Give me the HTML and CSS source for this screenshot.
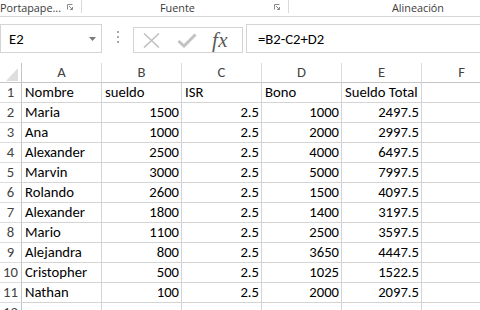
FILE: index.html
```html
<!DOCTYPE html>
<html lang="es">
<head>
<meta charset="utf-8">
<link rel="stylesheet" href="styles.css">
</head>
<body>
<div class="ribbon">
  <div class="group g1">
    <span class="glabel">Portapape...</span>
    <svg class="launcher" width="6" height="6" viewBox="0 0 6 6"><path d="M0.5 5.5V0.5H5.5" fill="none" stroke="#8a8a8a"/><path d="M2 2L5.5 5.5M5.5 3V5.5H3" fill="none" stroke="#8a8a8a"/></svg>
  </div>
  <div class="sep"></div>
  <div class="group g2">
    <span class="glabel">Fuente</span>
    <svg class="launcher" width="6" height="6" viewBox="0 0 6 6"><path d="M0.5 5.5V0.5H5.5" fill="none" stroke="#8a8a8a"/><path d="M2 2L5.5 5.5M5.5 3V5.5H3" fill="none" stroke="#8a8a8a"/></svg>
  </div>
  <div class="sep"></div>
  <div class="group g3">
    <span class="glabel">Alineación</span>
  </div>
</div>

<div class="fbar">
  <div class="namebox">
    <span class="nbtext">E2</span>
    <svg class="nbarrow" width="7" height="4" viewBox="0 0 7 4"><path d="M0 0H7L3.5 4Z" fill="#7a7a7a"/></svg>
  </div>
  <div class="grip">
    <svg width="2" height="13" viewBox="0 0 2 13"><rect x="0" y="0" width="2" height="2" fill="#a8a8a8"/><rect x="0" y="5" width="2" height="2" fill="#a8a8a8"/><rect x="0" y="10" width="2" height="2" fill="#a8a8a8"/></svg>
  </div>
  <div class="fxbox">
    <svg class="ico" width="17" height="15" viewBox="0 0 17 15"><path d="M1 0.5L16 14.5M16 0.5L1 14.5" stroke="#c2c2c2" stroke-width="1.6" fill="none"/></svg>
    <svg class="ico" width="20" height="15" viewBox="0 0 20 15"><path d="M1.5 8L7 13L18.5 1.5" stroke="#c2c2c2" stroke-width="3" fill="none"/></svg>
    <span class="fx">fx</span>
  </div>
  <div class="formula">=B2-C2+D2</div>
</div>

<div class="sheet">
  <div class="cell hdr corner"><svg width="12" height="13" viewBox="0 0 12 13"><path d="M12 0V13H0Z" fill="#dedede"/></svg></div>
  <div class="cell hdr">A</div><div class="cell hdr">B</div><div class="cell hdr">C</div><div class="cell hdr">D</div><div class="cell hdr">E</div><div class="cell hdr">F</div>

  <div class="cell rh">1</div><div class="cell">Nombre</div><div class="cell">sueldo</div><div class="cell">ISR</div><div class="cell">Bono</div><div class="cell">Sueldo Total</div><div class="cell"></div>
  <div class="cell rh">2</div><div class="cell">Maria</div><div class="cell num">1500</div><div class="cell num">2.5</div><div class="cell num">1000</div><div class="cell num">2497.5</div><div class="cell"></div>
  <div class="cell rh">3</div><div class="cell">Ana</div><div class="cell num">1000</div><div class="cell num">2.5</div><div class="cell num">2000</div><div class="cell num">2997.5</div><div class="cell"></div>
  <div class="cell rh">4</div><div class="cell">Alexander</div><div class="cell num">2500</div><div class="cell num">2.5</div><div class="cell num">4000</div><div class="cell num">6497.5</div><div class="cell"></div>
  <div class="cell rh">5</div><div class="cell">Marvin</div><div class="cell num">3000</div><div class="cell num">2.5</div><div class="cell num">5000</div><div class="cell num">7997.5</div><div class="cell"></div>
  <div class="cell rh">6</div><div class="cell">Rolando</div><div class="cell num">2600</div><div class="cell num">2.5</div><div class="cell num">1500</div><div class="cell num">4097.5</div><div class="cell"></div>
  <div class="cell rh">7</div><div class="cell">Alexander</div><div class="cell num">1800</div><div class="cell num">2.5</div><div class="cell num">1400</div><div class="cell num">3197.5</div><div class="cell"></div>
  <div class="cell rh">8</div><div class="cell">Mario</div><div class="cell num">1100</div><div class="cell num">2.5</div><div class="cell num">2500</div><div class="cell num">3597.5</div><div class="cell"></div>
  <div class="cell rh">9</div><div class="cell">Alejandra</div><div class="cell num">800</div><div class="cell num">2.5</div><div class="cell num">3650</div><div class="cell num">4447.5</div><div class="cell"></div>
  <div class="cell rh">10</div><div class="cell">Cristopher</div><div class="cell num">500</div><div class="cell num">2.5</div><div class="cell num">1025</div><div class="cell num">1522.5</div><div class="cell"></div>
  <div class="cell rh">11</div><div class="cell">Nathan</div><div class="cell num">100</div><div class="cell num">2.5</div><div class="cell num">2000</div><div class="cell num">2097.5</div><div class="cell"></div>
  <div class="cell rh">12</div><div class="cell"></div><div class="cell"></div><div class="cell"></div><div class="cell"></div><div class="cell"></div><div class="cell"></div>
</div>
</body>
</html>
```
FILE: styles.css
```css
html, body {
  margin: 0;
  padding: 0;
  background: #ffffff;
}
body {
  width: 480px;
  height: 310px;
  overflow: hidden;
  font-family: "Carlito", "Liberation Sans", sans-serif;
  color: #000;
}

/* Ribbon group labels */
.ribbon {
  display: flex;
  height: 16px;
  border-bottom: 1px solid #d6d6d6;
  font-family: "Open Sans", "Noto Sans", sans-serif;
  font-size: 10.8px;
  color: #3a3a3a;
}
.group {
  display: flex;
  align-items: center;
  height: 16px;
}
.glabel {
  white-space: nowrap;
  line-height: 16px;
}
.g1 {
  width: 81px;
}
.g2 {
  width: 206px;
  padding-left: 78px;
  box-sizing: border-box;
}
.g3 {
  padding-left: 103px;
}
.launcher {
  margin-left: auto;
  margin-right: 8px;
  margin-bottom: 2px;
}
.sep {
  width: 1px;
  height: 13px;
  background: #dadada;
}

/* Formula bar */
.fbar {
  display: flex;
  align-items: flex-end;
  height: 29px;
  margin-top: 7px;
  margin-bottom: 10px;
}
.namebox {
  box-sizing: border-box;
  width: 102px;
  height: 29px;
  border: 1px solid #d4d4d4;
  display: flex;
  align-items: center;
  font-size: 14.67px;
}
.nbtext {
  padding-left: 8px;
}
.nbarrow {
  margin-left: auto;
  margin-right: 5px;
}
.grip {
  width: 31px;
  height: 29px;
  display: flex;
  align-items: center;
  justify-content: center;
  padding-bottom: 2px;
  box-sizing: border-box;
}
.fxbox {
  box-sizing: border-box;
  width: 110px;
  height: 26px;
  border: 1px solid #d4d4d4;
  display: flex;
  align-items: center;
  padding-left: 9px;
  gap: 17px;
}
.ico {
  display: block;
}
.fx {
  font-family: "Liberation Serif", serif;
  font-style: italic;
  font-size: 21px;
  color: #5a5a5a;
  line-height: 20px;
  margin-left: -2px;
  letter-spacing: 0.5px;
}
.formula {
  box-sizing: border-box;
  flex: 1;
  height: 29px;
  margin-left: 3px;
  border: 1px solid #d4d4d4;
  border-right: none;
  display: flex;
  align-items: center;
  padding-left: 11px;
  font-size: 14.67px;
}

/* Sheet grid */
.sheet {
  display: grid;
  grid-template-columns: 22px repeat(6, 80px);
  grid-auto-rows: 20px;
  width: 502px;
  font-size: 14.67px;
}
.cell {
  box-sizing: border-box;
  border-right: 1px solid #d4d4d4;
  border-bottom: 1px solid #d4d4d4;
  padding: 0 2px 0 3px;
  line-height: 19px;
  white-space: nowrap;
  overflow: visible;
}
.num {
  text-align: right;
}
.hdr {
  text-align: center;
  color: #444444;
  border-right-color: #dcdcdc;
  border-bottom-color: #c4c4c4;
  padding: 0;
}
.rh {
  text-align: center;
  color: #444444;
  border-right-color: #c4c4c4;
  border-bottom-color: #dcdcdc;
  padding: 0;
}
.corner {
  display: flex;
  justify-content: flex-end;
  align-items: flex-end;
  padding: 0 3px 1px 0;
  border-right-color: #c4c4c4;
}
.corner svg {
  display: block;
}
```
